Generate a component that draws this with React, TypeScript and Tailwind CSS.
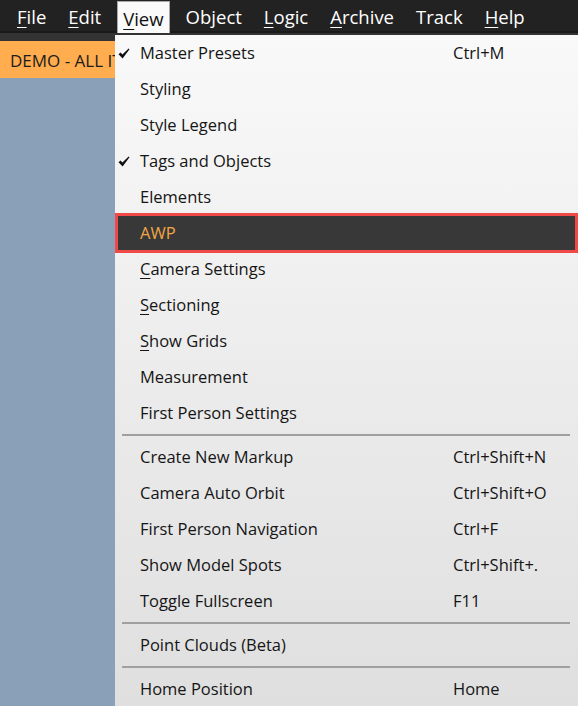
import React from 'react';

type Item = {
  label: string;
  ul?: number;
  shortcut?: string;
  checked?: boolean;
  active?: boolean;
};

const groups: Item[][] = [
  [
    { label: 'Master Presets', shortcut: 'Ctrl+M', checked: true },
    { label: 'Styling' },
    { label: 'Style Legend' },
    { label: 'Tags and Objects', checked: true },
    { label: 'Elements' },
    { label: 'AWP', active: true },
    { label: 'Camera Settings', ul: 0 },
    { label: 'Sectioning', ul: 0 },
    { label: 'Show Grids', ul: 0 },
    { label: 'Measurement' },
    { label: 'First Person Settings' },
  ],
  [
    { label: 'Create New Markup', shortcut: 'Ctrl+Shift+N' },
    { label: 'Camera Auto Orbit', shortcut: 'Ctrl+Shift+O' },
    { label: 'First Person Navigation', shortcut: 'Ctrl+F' },
    { label: 'Show Model Spots', shortcut: 'Ctrl+Shift+.' },
    { label: 'Toggle Fullscreen', shortcut: 'F11' },
  ],
  [{ label: 'Point Clouds (Beta)' }],
  [{ label: 'Home Position', shortcut: 'Home' }],
];

const topMenu: { label: string; ul?: boolean }[] = [
  { label: 'File', ul: true },
  { label: 'Edit', ul: true },
  { label: 'View', ul: true },
  { label: 'Object' },
  { label: 'Logic', ul: true },
  { label: 'Archive', ul: true },
  { label: 'Track' },
  { label: 'Help', ul: true },
];

const Underlined = ({ text, at }: { text: string; at?: number }) => {
  if (at === undefined) return <>{text}</>;
  return (
    <>
      {text.slice(0, at)}
      <span className="underline underline-offset-[3px] decoration-1">{text[at]}</span>
      {text.slice(at + 1)}
    </>
  );
};

const Check = () => (
  <svg width="12" height="11" viewBox="0 0 12 11" className="block">
    <path d="M0.5 6.2 L2.6 4.4 L4.4 6.6 L10.6 0.4 L11.5 1.3 L4.6 10.4 Z" fill="#111" />
  </svg>
);

const Row = ({ item }: { item: Item }) => {
  if (item.active) {
    return (
      <div className="flex items-center h-[40px] -my-[2px] border-[3px] border-[#f14848] bg-[#383838] text-[#f2a644]">
        <span className="w-[22px]" />
        <span className="w-[313px]">{item.label}</span>
        <span>{item.shortcut}</span>
      </div>
    );
  }
  return (
    <div className="flex items-center h-[36px] text-[#151515]">
      <span className="w-[25px] pl-[3px]">{item.checked && <Check />}</span>
      <span className="w-[313px] whitespace-nowrap">
        <Underlined text={item.label} at={item.ul} />
      </span>
      <span className="whitespace-nowrap">{item.shortcut}</span>
    </div>
  );
};

const Separator = () => (
  <div className="h-[8px] flex items-center pl-[7px] pr-[8px]">
    <div className="h-[2px] w-full bg-[#a0a0a0]" />
  </div>
);

export default function App() {
  return (
    <div
      className="relative w-[578px] h-[706px] overflow-hidden bg-[#8aa0b8] text-[16.5px]"
      style={{ fontFamily: '"Open Sans", "Noto Sans", sans-serif' }}
    >
      {/* menubar */}
      <div className="h-[33px] bg-[#222222] border-b-2 border-[#1a1a1a] flex items-stretch pl-[11px] gap-[10px] text-white text-[18.5px]">
        {topMenu.map((m) =>
          m.label === 'View' ? (
            <div
              key={m.label}
              className="flex items-center pt-[3px] px-[5px] mt-[1px] -mb-[2px] bg-[#fafafa] border border-[#a8a8a8] border-b-0 text-[#111]"
            >
              <Underlined text={m.label} at={0} />
            </div>
          ) : (
            <div key={m.label} className="flex items-center pt-[3px] px-[6px]">
              <Underlined text={m.label} at={m.ul ? 0 : undefined} />
            </div>
          )
        )}
      </div>
      <div className="h-[8px] bg-[#333333]" />
      <div className="h-[37px] bg-[#ffad4e] flex items-center pl-[10px] pt-[3px] text-[#1c1c1c] text-[17px] whitespace-nowrap">
        DEMO - ALL ITEMS
      </div>

      {/* View dropdown */}
      <div className="absolute left-[115px] top-[35px] w-[463px] pb-[4px] bg-gradient-to-b from-[#f9f9f9] to-[#dfdfdf]">
        {groups.map((g, i) => (
          <React.Fragment key={i}>
            {i > 0 && <Separator />}
            {g.map((it) => (
              <Row key={it.label} item={it} />
            ))}
          </React.Fragment>
        ))}
      </div>
    </div>
  );
}
